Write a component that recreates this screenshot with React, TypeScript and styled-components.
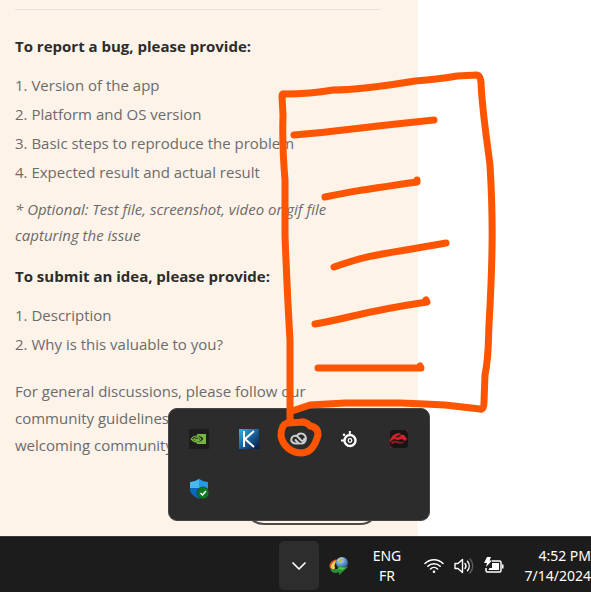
import React from 'react';
import styled, { createGlobalStyle, css } from 'styled-components';

const GlobalStyle = createGlobalStyle`
  * { box-sizing: border-box; }
  body { margin: 0; background: #fff; overflow: hidden; }
  h2, p, ol { margin: 0; padding: 0; }
`;

const Page = styled.div`
  position: relative;
  display: flex;
  flex-direction: column;
  min-height: 100vh;
  overflow: hidden;
  font-family: 'Noto Sans', sans-serif;
`;

const Guidelines = styled.main`
  flex: 1;
  display: flex;
  flex-direction: column;
  width: 100%;
  max-width: 418px;
  padding: 9px 38px 11px 15px;
  background: #fef3e9;
  color: #6b6b6b;
  font-family: 'Open Sans', 'Noto Sans', sans-serif;
  font-size: 15px;
`;

const Divider = styled.hr`
  width: 100%;
  height: 1px;
  margin: 0 0 23px;
  border: 0;
  background: #e9e0de;
`;

const Heading = styled.h2`
  margin-bottom: 11px;
  color: #2c2c2c;
  font-size: 15px;
  font-weight: 700;
  line-height: 27px;
`;

const Steps = styled.ol<{ $gap: number }>`
  margin-bottom: ${({ $gap }) => $gap}px;
  list-style-position: inside;
  line-height: 29px;
`;

const Note = styled.p`
  margin-bottom: 15px;
  font-style: italic;
  line-height: 26px;
`;

const Paragraph = styled.p`
  line-height: 27px;
`;

const OutlineButton = styled.button`
  align-self: flex-end;
  width: 136px;
  height: 40px;
  margin-top: auto;
  border: 2px solid #4b4b4b;
  border-radius: 20px;
  background: transparent;
`;

const Taskbar = styled.footer`
  display: flex;
  justify-content: flex-end;
  align-items: stretch;
  height: 56px;
  padding: 4px 0 2px;
  border-top: 1px solid #3c3a39;
  background: #1c1c1c;
  color: #fff;
`;

const trayButton = css`
  display: flex;
  flex: none;
  align-items: center;
  justify-content: center;
  padding: 0;
  border: 0;
  background: transparent;
  color: #fff;
  font-family: 'Noto Sans', sans-serif;
  font-size: 14px;
  line-height: 20px;
`;

const TrayButton = styled.button<{ $width: number; $active?: boolean }>`
  ${trayButton}
  width: ${({ $width }) => $width}px;
  border-radius: 5px;
  background: ${({ $active }) => ($active ? '#2d2d2d' : 'transparent')};
`;

const QuickSettings = styled.button`
  ${trayButton}
  gap: 10px;
  width: 98px;
`;

const Clock = styled.button`
  ${trayButton}
  width: 78px;
  justify-content: flex-end;
  text-align: right;
  white-space: nowrap;
`;

const Flyout = styled.section`
  position: absolute;
  right: 161px;
  bottom: 71px;
  display: grid;
  grid-template-columns: repeat(5, 50px);
  grid-auto-rows: 50px;
  padding: 5px 5px 6px;
  border: 1px solid #474543;
  border-radius: 9px;
  background: #2c2c2c;
`;

const FlyoutButton = styled.button`
  ${trayButton}
`;

const Annotation = styled.svg`
  position: absolute;
  right: 91px;
  bottom: 132px;
  width: 225px;
  height: 395px;
  fill: none;
  stroke: #ff5500;
  stroke-width: 7;
  stroke-linecap: round;
  stroke-linejoin: round;
  pointer-events: none;
`;

const NvidiaIcon = () => (
  <svg width="20" height="20" viewBox="0 0 20 20" fill="none">
    <path d="M0 0h20v20H0z" fill="#1c1d1c" />
    <path d="M8 5h9v10H8z" fill="#76b843" />
    <path d="M2 10c2-4 8-6 13 0-4 6-10 4-13 0Z" fill="#1c1d1c" />
    <path d="M8 6c3 0 6 2 7 4-3 4-9 5-13 0 3-4 7-4 10 0-2 3-5 2-7 0 2-2 4-2 5 0-1 1-2 1-3 0M8 13c-2 0-4-1-5-3" stroke="#76b843" strokeWidth="1.1" />
  </svg>
);

const KIcon = () => (
  <svg width="20" height="20" viewBox="0 0 20 20">
    <defs>
      <linearGradient id="kBlue" x1="0" y1="0" x2="1" y2="1">
        <stop stopColor="#35b4e3" />
        <stop offset=".5" stopColor="#17639d" />
        <stop offset="1" stopColor="#08183f" />
      </linearGradient>
    </defs>
    <path d="M0 0h20v20H0z" fill="url(#kBlue)" />
    <path d="M5 2v16M15 2 6 10l9 8" fill="none" stroke="#fff" strokeWidth="2" />
  </svg>
);

const CreativeCloudIcon = () => (
  <svg width="20" height="20" viewBox="0 0 20 20" fill="none" stroke="#cfcfcf" strokeWidth="2" strokeLinecap="round">
    <path d="M11 14.500H6.300a3.900 3.900 0 1 1 2.200-7l3.800 4c1.300 1 3-.1 3-1.700" />
    <path d="M8 6.500a5 5 0 1 1 4.700 8" />
    <path d="M6.500 11 9 13.500" />
  </svg>
);

const SteelSeriesIcon = () => (
  <svg width="20" height="20" viewBox="0 0 20 20" fill="none">
    <circle cx="11" cy="11.500" r="5.500" stroke="#fff" strokeWidth="2.400" />
    <circle cx="11" cy="11.500" r="1.800" stroke="#fff" strokeWidth="1.300" />
    <path d="M10.800 2v4M2 11.500h4" stroke="#fff" strokeWidth="2" />
    <circle cx="5" cy="5.800" r="1.300" fill="#fff" />
  </svg>
);

const DragonIcon = () => (
  <svg width="20" height="20" viewBox="0 0 20 20">
    <rect x="1" y="1" width="18" height="18" rx="3" fill="#171516" />
    <path d="M2 9c2-4 6-5 10-5l-2 1.500 5 .5 3 4-2 2-3-2-4 1-4-1-3 2-2 1z" fill="#d0222a" />
    <path d="M2 13c3-2 7-1 9 0l5-.5-3 2H9l-3-1-3 2z" fill="#8f1a24" />
    <path d="m6 8 4-2 2 1-3 1.500z" fill="#29191a" />
    <path d="M16 1h3v4l-1-3zM1 15l1 3 3 1H1z" fill="#8b1727" />
  </svg>
);

const DefenderIcon = () => (
  <svg width="20" height="20" viewBox="0 0 20 20">
    <path d="M10 0C7 2 4 3 1 3v7c0 4 4 7.500 9 9.500 5-2 9-5.500 9-9.500V3c-3 0-6-1-9-3Z" fill="#1680d5" />
    <path d="M10 0C7 2 4 3 1 3v6h9z" fill="#48b8ef" />
    <path d="M10 0c3 2 6 3 9 3v6h-9z" fill="#2798e2" />
    <path d="M1 9h9v10.500C5 17.500 1 14 1 9z" fill="#0869bd" />
    <circle cx="14" cy="14" r="6" fill="#0d7a1f" stroke="#2c2c2c" strokeWidth=".6" />
    <path d="m11.500 14 2 2 3.500-4" fill="none" stroke="#fff" strokeWidth="1.500" />
  </svg>
);

const ChevronIcon = () => (
  <svg width="16" height="16" viewBox="0 0 16 16" fill="none" stroke="#fff" strokeWidth="1.700" strokeLinecap="round" strokeLinejoin="round">
    <path d="m2 5 6 6 6-6" />
  </svg>
);

const DownloadManagerIcon = () => (
  <svg width="20" height="20" viewBox="0 0 20 20">
    <defs>
      <radialGradient id="globe" cx=".35" cy=".25" r=".8">
        <stop stopColor="#d7efff" />
        <stop offset=".5" stopColor="#6198d0" />
        <stop offset="1" stopColor="#234d92" />
      </radialGradient>
    </defs>
    <circle cx="13" cy="7" r="6" fill="url(#globe)" />
    <path d="m10 3 3-1 1 2-3 3-2-1z" fill="#b2bd58" />
    <path d="M8 3C3 4-1 8 1 12l3 2 2-2c-2-2-1-5 2-9Z" fill="#d8582c" />
    <path d="M8 4C4 6 1 9 2 12l3 2 1-2c-1-2 0-5 2-8Z" fill="#efcf4c" />
    <path d="M1 12c1 5 5 6 9 4v3l9-8-11-1 2 2c-4 2-7 2-9 0Z" fill="#269238" />
    <path d="m10 11 7 1-4 2-2-1c-3 1-5 1-7 1 2 0 5 0 6-3z" fill="#55c83a" />
  </svg>
);

const WifiIcon = () => (
  <svg width="20" height="18" viewBox="0 0 20 18" fill="none" stroke="#fff" strokeWidth="1.500" strokeLinecap="round">
    <path d="M1 6.500a12.700 12.700 0 0 1 18 0M3.800 9.300a8.800 8.800 0 0 1 12.400 0M6.500 12a5 5 0 0 1 7 0" />
    <circle cx="10" cy="14.700" r="1.300" fill="#fff" stroke="none" />
  </svg>
);

const VolumeIcon = () => (
  <svg width="20" height="18" viewBox="0 0 20 18" fill="none" stroke="#fff" strokeWidth="1.400" strokeLinecap="round" strokeLinejoin="round">
    <path d="M1 6.500h3L8.500 2.500v13L4 11.500H1zM11 6.500c1.200 1.500 1.200 3.500 0 5M13.500 4.200c2.300 2.800 2.300 6.800 0 9.600" />
    <path d="M16 2c3.600 4.100 3.600 9.900 0 14" stroke="#5c5c5c" />
  </svg>
);

const BatteryIcon = () => (
  <svg width="20" height="18" viewBox="0 0 20 18" fill="none">
    <path d="M8 4h7.500A1.500 1.500 0 0 1 17 5.500v8a1.500 1.500 0 0 1-1.500 1.500h-12A1.500 1.500 0 0 1 2 13.500V11" stroke="#fff" strokeWidth="1.500" />
    <path d="M8 6h7v7H4.500l1-2H8zM18 7.500h1.500v4H18zM3 0h4L5.500 3.500H8L2 10l1-4H0z" fill="#fff" />
  </svg>
);

const hiddenIcons = [
  { label: 'NVIDIA Settings', Icon: NvidiaIcon },
  { label: 'K', Icon: KIcon },
  { label: 'Creative Cloud', Icon: CreativeCloudIcon },
  { label: 'SteelSeries', Icon: SteelSeriesIcon },
  { label: 'Dragon Center', Icon: DragonIcon },
  { label: 'Windows Security', Icon: DefenderIcon },
];

export default function App() {
  return (
    <Page>
      <GlobalStyle />
      <Guidelines>
        <Divider />
        <Heading>To report a bug, please provide:</Heading>
        <Steps $gap={9}>
          <li>Version of the app</li>
          <li>Platform and OS version</li>
          <li>Basic steps to reproduce the problem</li>
          <li>Expected result and actual result</li>
        </Steps>
        <Note>
          * Optional: Test file, screenshot, video or gif file
          <br />
          capturing the issue
        </Note>
        <Heading>To submit an idea, please provide:</Heading>
        <Steps $gap={19}>
          <li>Description</li>
          <li>Why is this valuable to you?</li>
        </Steps>
        <Paragraph>
          For general discussions, please follow our
          <br />
          community guidelines
          <br />
          welcoming community
        </Paragraph>
        <OutlineButton type="button" aria-label="Post" />
      </Guidelines>
      <Taskbar>
        <TrayButton type="button" $width={40} $active aria-label="Show hidden icons">
          <ChevronIcon />
        </TrayButton>
        <TrayButton type="button" $width={40} aria-label="Download manager">
          <DownloadManagerIcon />
        </TrayButton>
        <TrayButton type="button" $width={56}>
          ENG
          <br />
          FR
        </TrayButton>
        <QuickSettings type="button" aria-label="Network, volume and battery">
          <WifiIcon />
          <VolumeIcon />
          <BatteryIcon />
        </QuickSettings>
        <Clock type="button">
          4:52 PM
          <br />
          7/14/2024
        </Clock>
      </Taskbar>
      <Flyout aria-label="Hidden icons">
        {hiddenIcons.map(({ label, Icon }) => (
          <FlyoutButton key={label} type="button" aria-label={label}>
            <Icon />
          </FlyoutButton>
        ))}
      </Flyout>
      <Annotation viewBox="275 65 225 395" aria-hidden="true">
        <path d="M290 420V340Q287 290 285 235V180Q282 145 283 115L282 96Q282 93 285 94Q310 94 333 90Q360 90 415 81Q440 79 457 76L477 75Q480 75 481 82C482 110 487 140 490 165C493 215 493 255 489 325C488 345 489 355 485 375L484 402Q484 410 480 409L445 405L425 404L400 403H345L310 405L292 411" />
        <path d="M294 135C345 131 345 129 434 120M325 197C355 191 355 191 417 182L417 180M334 267C375 253 380 255 446 243M315 324C355 317 360 312 427 302L426 300M318 368H421L420 366" />
        <path d="M304 422L287 423Q281 425 281 436C283 446 291 453 302 453C311 452 315 446 318 435Q318 427 310 426Q307 422 301 422" />
      </Annotation>
    </Page>
  );
}
